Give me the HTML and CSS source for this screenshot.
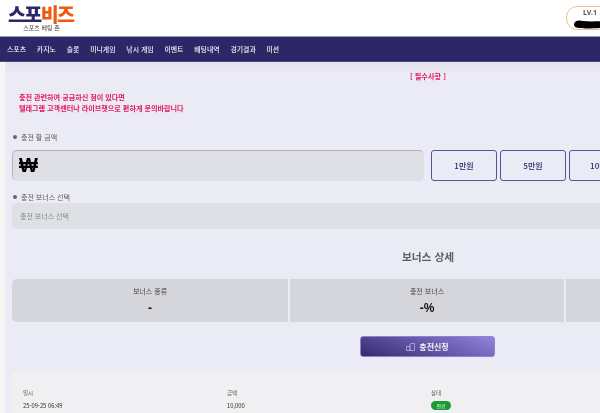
FILE: index.html
```html
<!DOCTYPE html>
<html lang="ko">
<head>
<meta charset="utf-8">
<title>스포비즈 충전</title>
<link rel="stylesheet" href="styles.css">
</head>
<body>
<div class="page">
  <header class="top">
    <div class="brand">
      <div class="logo"><span class="navy">스포</span><span class="orange">비즈</span></div>
      <div class="tagline">스포츠 베팅 존</div>
    </div>
    <div class="level">
      <span class="lv">LV.1</span>
      <svg class="scribble" width="40" height="10" viewBox="0 0 40 10"><path d="M1 5 C2 1 6 1 10 2 C18 3 28 2 40 2 L40 8 C28 9 14 10 7 9 C3 9 1 8 1 5Z" fill="#000"/></svg>
    </div>
  </header>
  <nav class="nav">
    <a>스포츠</a><a>카지노</a><a>슬롯</a><a>미니게임</a><a>낚시 게임</a><a>이벤트</a><a>배팅내역</a><a>경기결과</a><a>미션</a>
  </nav>
  <main class="main">
    <div class="content">
      <div class="notice-title">[ 필수사항 ]</div>
      <p class="notice">충전 관련하여 궁금하신 점이 있다면<br>텔레그램 고객센터나 라이브챗으로 편하게 문의바랍니다</p>

      <div class="label label-amount">충전 할 금액</div>
      <div class="amount-row">
        <div class="amount-input">₩</div>
        <button class="chip">1만원</button>
        <button class="chip">5만원</button>
        <button class="chip">10만원</button>
        <button class="chip">50만원</button>
      </div>

      <div class="label label-bonus">충전 보너스 선택</div>
      <div class="select">충전 보너스 선택</div>

      <h2 class="section-title">보너스 상세</h2>
      <div class="stats">
        <div class="stat"><span class="stat-name">보너스 종류</span><strong class="stat-value">-</strong></div>
        <div class="stat"><span class="stat-name">충전 보너스</span><strong class="stat-value">-%</strong></div>
        <div class="stat"><span class="stat-name">최대 보너스</span><strong class="stat-value">-</strong></div>
      </div>

      <button class="submit">
        <svg width="9" height="8" viewBox="0 0 9 8"><path d="M.5 3.500H4V7.500H.5ZM4 1V7.500H8.500V.5H4.500" fill="none" stroke="#b9b4dc" stroke-width=".8"/></svg>
        충전신청
      </button>

      <section class="history">
        <div class="h-head">일시</div><div class="h-head">금액</div><div class="h-head">상태</div>
        <div class="h-cell">25-09-25 06:49</div><div class="h-cell">10,000</div><div class="h-cell"><span class="badge">완료</span></div>
      </section>
    </div>
  </main>
</div>
</body>
</html>
```
FILE: styles.css
```css
* { box-sizing: border-box; margin: 0; padding: 0; }
html, body { width: 600px; height: 413px; overflow: hidden; background: #f5f5f6; }
body { font-family: "Noto Sans CJK KR", "Noto Sans", sans-serif; color: #333; }
.page { width: 600px; height: 413px; overflow: hidden; filter: blur(0.3px); }

.top { height: 37px; background: #fff; border-bottom: 1px solid #9d99b6; display: flex; justify-content: space-between; padding: 4px 0 0 8px; overflow: hidden; }
.brand { width: 67px; text-align: center; }
.logo { font-size: 19.500px; line-height: 19px; font-weight: 900; letter-spacing: -1.600px; white-space: nowrap; text-align: left; }
.navy { color: #2d2768; }
.orange { color: #ee5a14; }
.tagline { font-size: 6px; line-height: 8px; margin-top: 1px; color: #444; }
.level { width: 60px; height: 24px; margin: 2px -26px 0 0; border: 1px solid #edc48d; border-radius: 11px; background: #fff; display: flex; flex-direction: column; align-items: flex-start; padding: 1px 0 0 16px; }
.lv { font-size: 7px; line-height: 10px; font-weight: 700; color: #555; font-family: "Noto Sans", sans-serif; }
.scribble { margin: 1px 0 0 -10px; flex: none; }

.nav { height: 25px; background: #2d2768; border-bottom: 1px solid #4a4580; display: flex; align-items: center; gap: 10.800px; padding-left: 7px; white-space: nowrap; }
.nav a { color: #f0f0f8; font-size: 6.900px; font-weight: 500; }

.main { width: 857px; height: 351px; margin-left: 5px; background: linear-gradient(#e3e2ef, #ebebf5 12px); padding: 0 7px; }
.content { width: 832px; position: relative; }

.notice-title { padding-top: 10px; text-align: center; font-size: 7.200px; line-height: 9px; font-weight: 700; color: #e6155f; }
.notice { margin: 11px 0 0 7px; font-size: 7.100px; line-height: 11px; font-weight: 700; color: #e6155f; }

.label { font-size: 7px; line-height: 10px; color: #5a5a5a; padding-left: 9px; position: relative; }
.label::before { content: ""; position: absolute; left: 1px; top: 3px; width: 4px; height: 4px; border-radius: 50%; background: #666; }
.label-amount { margin-top: 18px; }
.label-bonus { margin-top: 11px; }

.amount-row { display: flex; gap: 3px; margin-top: 8px; }
.amount-input { width: 412px; height: 31px; margin-right: 4px; background: #dee0e6; border: 1px solid #dee0e6; border-top-color: #b4b4b8; border-left-color: #b4b4b8; border-radius: 5px; font-size: 20px; line-height: 28px; font-weight: 700; color: #000; padding-left: 6px; font-family: "Liberation Sans", sans-serif; }
.chip { flex: none; width: 66px; height: 31px; background: #ebebf5; border: 1px solid #5a5196; border-radius: 3px; color: #2d2768; font: 500 8px "Noto Sans CJK KR", sans-serif; }

.select { height: 26px; margin-top: 1px; background: #dee0e6; border-radius: 4px; padding-left: 8px; font-size: 7px; line-height: 26px; color: #888; }

.section-title { margin-top: 19px; height: 18px; text-align: center; font-size: 10.700px; line-height: 18px; font-weight: 700; color: #5d5d65; }

.stats { display: grid; grid-template-columns: 276px 274px 278px; gap: 2px; margin-top: 13px; border-radius: 5px; overflow: hidden; }
.stat { height: 43px; background: #d5d5dc; display: flex; flex-direction: column; align-items: center; padding-top: 7px; }
.stat-name { font-size: 7px; line-height: 10px; color: #444; }
.stat-value { font-size: 12px; line-height: 14px; margin-top: 5px; color: #111; font-family: "Liberation Sans", sans-serif; }

.submit { display: flex; align-items: center; justify-content: center; gap: 4px; width: 135px; height: 21px; margin: 14px 0 0 348px; border: 1px solid #8d83cf; border-radius: 3px; background: linear-gradient(20deg, #352a6e, #9283e0); color: #f4f4fa; font: 700 8px "Noto Sans CJK KR", sans-serif; }

.history { display: grid; grid-template-columns: repeat(4, 204px); grid-auto-rows: 13px; align-items: center; margin-top: 14px; height: 60px; padding: 15px 11px 0; background: #f0f0f2; border-radius: 5px; }
.h-head { font-size: 5.500px; color: #555; }
.h-cell { font-size: 5.800px; color: #333; }
.history > :nth-child(3) { grid-column: 3; }
.history > :nth-child(4) { grid-column: 1; }
.badge { display: inline-block; width: 20px; height: 9px; border-radius: 5px; background: #1b9a32; color: #e6f5e8; text-align: center; font-size: 5px; line-height: 9px; }
```
